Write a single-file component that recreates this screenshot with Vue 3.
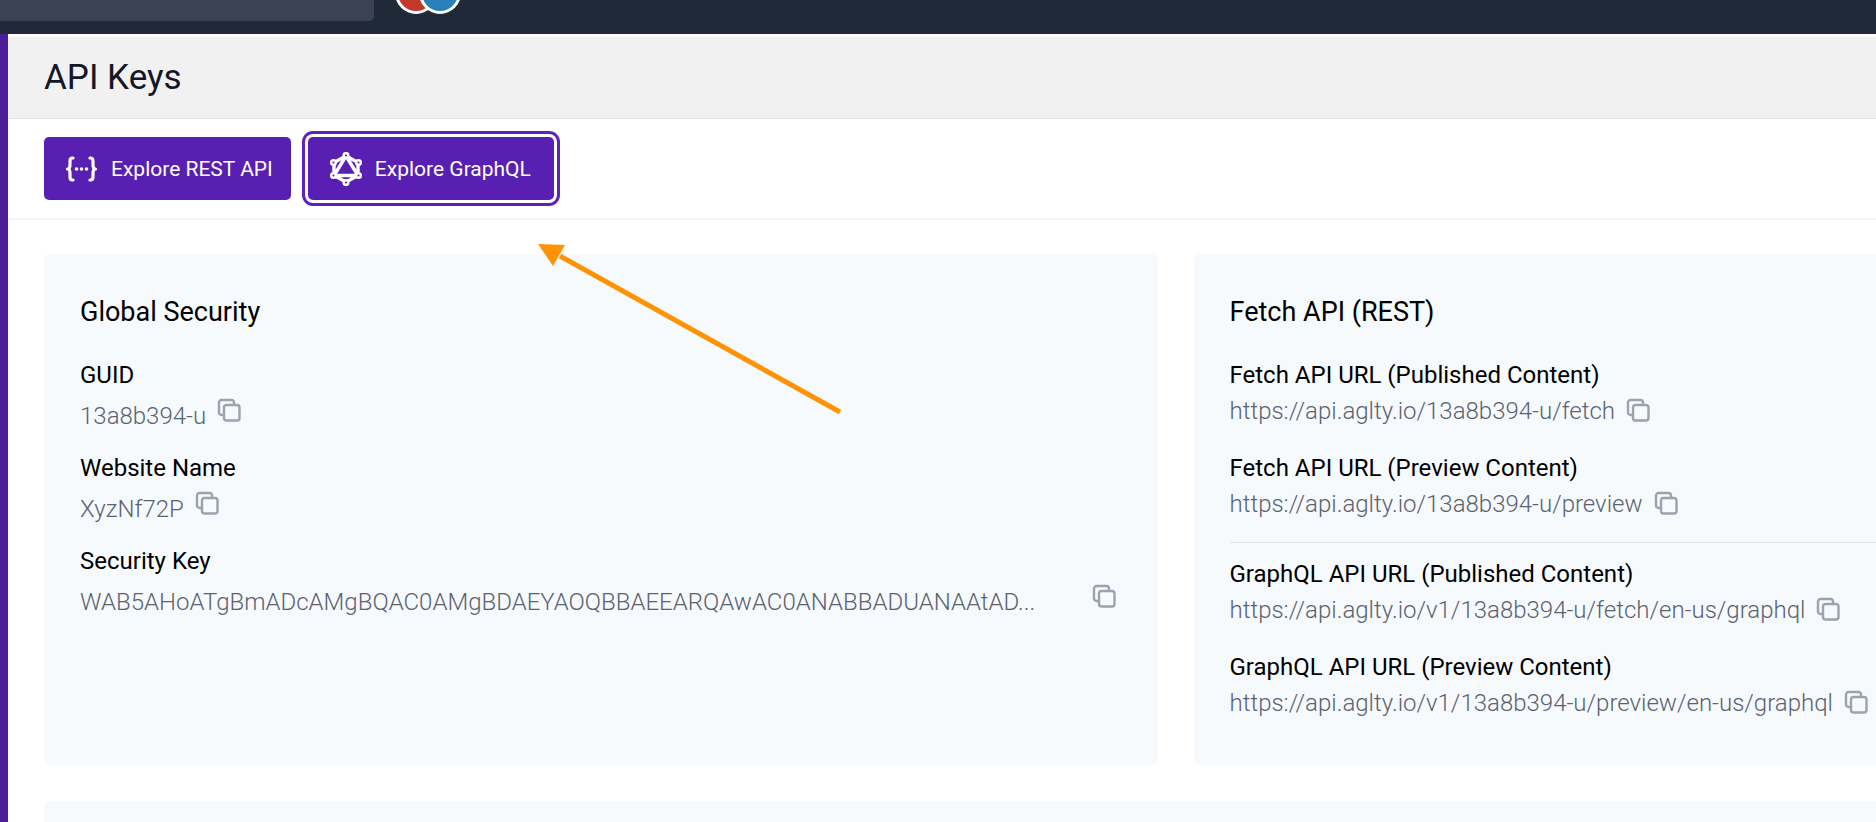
<script setup>
import { h } from 'vue'

const security = [
  { label: 'GUID', value: '13a8b394-u' },
  { label: 'Website Name', value: 'XyzNf72P' },
  { label: 'Security Key', value: 'WAB5AHoATgBmADcAMgBQAC0AMgBDAEYAOQBBAEEARQAwAC0ANABBADUANAAtAD...', wide: true },
]

const restUrls = [
  { label: 'Fetch API URL (Published Content)', value: 'https://api.aglty.io/13a8b394-u/fetch' },
  { label: 'Fetch API URL (Preview Content)', value: 'https://api.aglty.io/13a8b394-u/preview' },
]

const graphUrls = [
  { label: 'GraphQL API URL (Published Content)', value: 'https://api.aglty.io/v1/13a8b394-u/fetch/en-us/graphql' },
  { label: 'GraphQL API URL (Preview Content)', value: 'https://api.aglty.io/v1/13a8b394-u/preview/en-us/graphql' },
]

const CopyIcon = () =>
  h('svg', { width: 24, height: 24, viewBox: '0 0 24 24', fill: 'none', stroke: 'currentColor', 'stroke-width': 2.4, 'stroke-linecap': 'round', 'stroke-linejoin': 'round', 'aria-hidden': 'true' }, [
    h('rect', { x: 7, y: 7, width: 15.5, height: 15.5, rx: 2.6 }),
    h('path', { d: 'M7 17H4.600a2.600 2.600 0 0 1-2.600-2.600V4.600a2.600 2.600 0 0 1 2.600-2.600h9.800a2.600 2.600 0 0 1 2.600 2.600V7' }),
  ])

const copy = (text) => navigator.clipboard?.writeText(text)
</script>

<template>
  <div class="app">
    <header class="topbar">
      <div class="search"></div>
      <div class="avatars">
        <span class="avatar red"></span>
        <span class="avatar blue"></span>
      </div>
    </header>
    <div class="body">
      <aside class="rail"></aside>
      <main class="main">
        <div class="title-bar">
          <h1>API Keys</h1>
        </div>
        <div class="toolbar">
          <button type="button" class="btn">
            <svg width="34" height="34" viewBox="0 0 34 34" fill="none" stroke="currentColor" stroke-width="3.200" stroke-linecap="round" stroke-linejoin="round" aria-hidden="true">
              <path d="M8 6H7.500Q5 6 5 9V13Q5 17 2.500 17Q5 17 5 21V25Q5 28 7.500 28H8" />
              <path d="M25 6H25.500Q28 6 28 9V13Q28 17 30.500 17Q28 17 28 21V25Q28 28 25.500 28H25" />
              <g fill="currentColor" stroke="none">
                <circle cx="11.500" cy="17" r="1.800" />
                <circle cx="16.500" cy="17" r="1.800" />
                <circle cx="21.500" cy="17" r="1.800" />
              </g>
            </svg>
            <span>Explore REST API</span>
          </button>
          <button type="button" class="btn focused">
            <svg width="34" height="34" viewBox="0 0 34 34" fill="none" stroke="currentColor" aria-hidden="true">
              <g stroke-width="3.400" stroke-linejoin="round">
                <path d="M17 4L29 10.500V23.500L17 30L5 23.500V10.500Z" />
                <path d="M17 4L29 23.500H5Z" />
              </g>
              <g fill="#591fb2" stroke-width="2.500">
                <circle cx="17" cy="3.500" r="2.300" />
                <circle cx="29.500" cy="10.500" r="2.300" />
                <circle cx="29.500" cy="23.500" r="2.300" />
                <circle cx="17" cy="30.500" r="2.300" />
                <circle cx="4.500" cy="23.500" r="2.300" />
                <circle cx="4.500" cy="10.500" r="2.300" />
              </g>
            </svg>
            <span>Explore GraphQL</span>
          </button>
        </div>
        <div class="content">
          <section class="card">
            <h2>Global Security</h2>
            <dl class="fields security">
              <div v-for="f in security" :key="f.label">
                <dt>{{ f.label }}</dt>
                <dd :class="{ wide: f.wide }">
                  <span class="value">{{ f.value }}</span>
                  <button type="button" class="copy" :aria-label="'Copy ' + f.label" @click="copy(f.value)"><CopyIcon /></button>
                </dd>
              </div>
            </dl>
          </section>
          <section class="card clipped">
            <h2>Fetch API (REST)</h2>
            <dl class="fields">
              <div v-for="f in restUrls" :key="f.label">
                <dt>{{ f.label }}</dt>
                <dd>
                  <span class="value">{{ f.value }}</span>
                  <button type="button" class="copy" :aria-label="'Copy ' + f.label" @click="copy(f.value)"><CopyIcon /></button>
                </dd>
              </div>
            </dl>
            <hr />
            <dl class="fields">
              <div v-for="f in graphUrls" :key="f.label">
                <dt>{{ f.label }}</dt>
                <dd>
                  <span class="value">{{ f.value }}</span>
                  <button type="button" class="copy" :aria-label="'Copy ' + f.label" @click="copy(f.value)"><CopyIcon /></button>
                </dd>
              </div>
            </dl>
          </section>
          <section class="card clipped next"></section>
        </div>
        <svg class="arrow" width="304" height="172" viewBox="0 0 304 172" aria-hidden="true">
          <path d="M22 12L302 168" stroke="#ff9305" stroke-width="5" />
          <path d="M0 0L27 1L15 22Z" fill="#ff9305" />
        </svg>
      </main>
    </div>
  </div>
</template>

<style>
body {
  background: #fff;
}
</style>

<style scoped>
.app {
  display: flex;
  flex-direction: column;
  height: 100vh;
  overflow: hidden;
  font-family: Roboto, "Liberation Sans", sans-serif;
  color: #111827;
}
.topbar {
  display: flex;
  align-items: flex-end;
  flex: none;
  gap: 21px;
  height: 34px;
  overflow: hidden;
  background: #202937;
}
.search {
  width: 374px;
  height: 21px;
  margin-bottom: 13px;
  border-radius: 0 0 5px 0;
  background: #3b4353;
}
.avatars {
  display: flex;
  margin-bottom: 20px;
}
.avatar {
  box-sizing: border-box;
  width: 42px;
  height: 42px;
  border: 3px solid #fff;
  border-radius: 50%;
}
.red {
  background: #c0392b;
}
.blue {
  margin-left: -18px;
  background: #2980b9;
}
.body {
  display: flex;
  flex: 1;
  min-height: 0;
}
.rail {
  flex: none;
  width: 8px;
  background: #4c1d95;
}
.main {
  position: relative;
  flex: 1;
  min-width: 0;
}
.title-bar {
  padding: 19px 36px;
  border-top: 3px solid #fdfbfb;
  border-bottom: 1px solid #e4e5e7;
  background: #f1f1f1;
}
h1,
h2 {
  margin: 0;
  font-weight: 400;
}
h1 {
  font-size: 35px;
  line-height: 43px;
}
.toolbar {
  display: flex;
  gap: 17px;
  padding: 18px 36px;
  border-bottom: 2px solid #f3f4f6;
}
.btn {
  display: flex;
  align-items: center;
  gap: 12px;
  min-width: 246px;
  height: 63px;
  padding: 0 18px 0 21px;
  border: 0;
  border-radius: 5px;
  background: #591fb2;
  color: #fff;
  font: 400 21px/30px Roboto, "Liberation Sans", sans-serif;
  white-space: nowrap;
}
.focused {
  box-shadow: 0 0 0 3px #fff, 0 0 0 6px #5f20bf;
}
.content {
  display: grid;
  grid-template-columns: minmax(0, 31fr) minmax(0, 19fr);
  gap: 36px;
  padding: 34px 0 0 36px;
}
.card {
  padding: 37px 36px 44px;
  border-radius: 6px;
  background: #f7fafd;
}
.clipped {
  padding-right: 0;
  border-radius: 6px 0 0 6px;
}
.next {
  grid-column: 1 / -1;
}
h2 {
  margin-bottom: 24px;
  font-size: 27px;
  line-height: 42px;
  color: #000;
}
.fields {
  display: flex;
  flex-direction: column;
  gap: 21px;
  margin: 0;
}
dt {
  font-size: 24px;
  line-height: 36px;
  color: #000;
}
dd {
  display: flex;
  align-items: flex-start;
  gap: 11px;
  height: 36px;
  margin: 0;
  color: #5b6270;
  font-size: 24px;
  font-weight: 300;
  line-height: 36px;
  white-space: nowrap;
}
.security .value {
  padding-top: 5px;
}
.wide {
  justify-content: space-between;
  padding-right: 6px;
}
.copy {
  display: flex;
  padding: 5px 0;
  border: 0;
  background: none;
  color: #9ca3af;
}
hr {
  margin: 20px 0 13px;
  border: 0;
  border-top: 1px solid #dfe3e8;
}
.arrow {
  position: absolute;
  left: 530px;
  top: 210px;
}
</style>
